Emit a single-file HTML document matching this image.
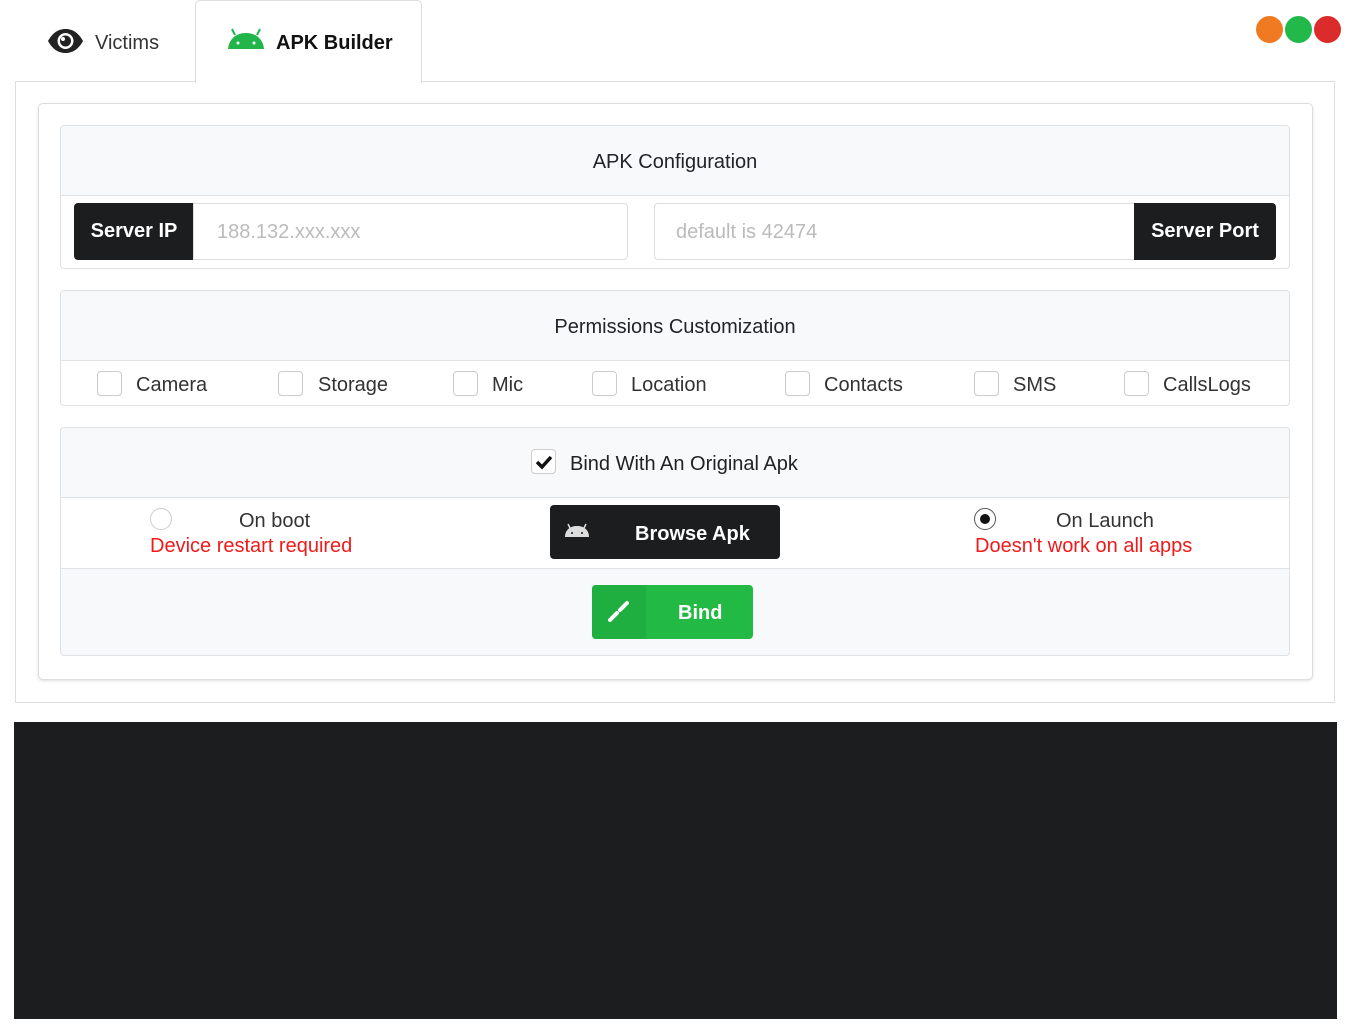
<!DOCTYPE html>
<html><head><meta charset="utf-8"><style>
*{box-sizing:border-box;margin:0;padding:0}
body{width:1350px;height:1035px;background:#fff;font-family:"Liberation Sans",sans-serif;color:#212529;position:relative;overflow:hidden}
.a{position:absolute}
.t{font-size:20px;white-space:nowrap}
.m{margin-top:2px}
.sec{position:absolute;left:60px;width:1230px;border:1px solid #dee2e6;border-radius:4px;background:#fff;overflow:hidden}
.hd{background:#f8f9fa;border-bottom:1px solid #dee2e6;position:relative}
.cb{position:absolute;width:25px;height:25px;border:1px solid #ccc;border-radius:4px;background:#fff}
.dot{position:absolute;width:27px;height:27px;border-radius:50%;top:16px}
</style></head><body>
<svg class="a" style="left:47px;top:28px" width="37" height="26" viewBox="0 0 37 26"><path d="M1 13C6 4 12 1 18.5 1S31 4 36 13C31 22 25 25 18.5 25S6 22 1 13Z" fill="#222"/><circle cx="18.5" cy="13" r="8" fill="#fff"/><circle cx="18.5" cy="13" r="5.5" fill="#222"/><circle cx="16" cy="11" r="2" fill="#fff"/></svg>
<div class="a t m" style="left:95px;top:30px;color:#333">Victims</div>
<div class="a" style="left:195px;top:0;width:227px;height:83px;border:1px solid #ddd;border-bottom:none;border-radius:5px 5px 0 0;background:#fff;z-index:2"></div>
<svg class="a" style="left:227px;top:27px;z-index:3" width="38" height="23" viewBox="0 0 38 23"><path d="M1 22C2 12 9 6 19 6S36 12 37 22Z" fill="#22b54a"/><path d="M8 8L5 2M30 8L33 2" stroke="#22b54a" stroke-width="2"/><circle cx="11" cy="16" r="1.5" fill="#fff"/><circle cx="27" cy="16" r="1.5" fill="#fff"/></svg>
<div class="a t m" style="left:276px;top:30px;z-index:3;color:#111;font-weight:bold">APK Builder</div>
<div class="dot" style="left:1256px;background:#f07a22"></div>
<div class="dot" style="left:1285px;background:#22b94a"></div>
<div class="dot" style="left:1314px;background:#dc2b2b"></div>
<div class="a" style="left:15px;top:81px;width:1320px;height:622px;border:1px solid #ddd;background:#fff"></div>
<div class="a" style="left:38px;top:103px;width:1275px;height:577px;border:1px solid #ddd;border-radius:5px;box-shadow:0 1px 3px rgba(0,0,0,.12);background:#fff"></div>
<div class="sec" style="top:125px;height:144px">
 <div class="hd" style="height:70px"><div class="a t m" style="left:0;right:0;text-align:center;top:23px">APK Configuration</div></div>
</div>
<div class="a t" style="left:74px;top:203px;width:120px;height:57px;background:#1c1d1f;color:#fff;border-radius:4px 0 0 4px;line-height:57px;text-align:center;font-weight:bold">Server IP</div>
<div class="a t" style="left:193px;top:203px;width:435px;height:57px;border:1px solid #ddd;border-radius:0 4px 4px 0;color:#bbb;line-height:57px;padding-left:23px">188.132.xxx.xxx</div>
<div class="a t" style="left:654px;top:203px;width:481px;height:57px;border:1px solid #ddd;border-radius:4px 0 0 4px;color:#bbb;line-height:57px;padding-left:21px">default is 42474</div>
<div class="a t" style="left:1134px;top:203px;width:142px;height:57px;background:#1c1d1f;color:#fff;border-radius:0 4px 4px 0;line-height:57px;text-align:center;font-weight:bold">Server Port</div>
<div class="sec" style="top:290px;height:116px">
 <div class="hd" style="height:70px"><div class="a t m" style="left:0;right:0;text-align:center;top:23px">Permissions Customization</div></div>
</div>
<div class="cb" style="left:97px;top:371px"></div><div class="a t m" style="left:136px;top:372px;color:#333">Camera</div>
<div class="cb" style="left:278px;top:371px"></div><div class="a t m" style="left:318px;top:372px;color:#333">Storage</div>
<div class="cb" style="left:453px;top:371px"></div><div class="a t m" style="left:492px;top:372px;color:#333">Mic</div>
<div class="cb" style="left:592px;top:371px"></div><div class="a t m" style="left:631px;top:372px;color:#333">Location</div>
<div class="cb" style="left:785px;top:371px"></div><div class="a t m" style="left:824px;top:372px;color:#333">Contacts</div>
<div class="cb" style="left:974px;top:371px"></div><div class="a t m" style="left:1013px;top:372px;color:#333">SMS</div>
<div class="cb" style="left:1124px;top:371px"></div><div class="a t m" style="left:1163px;top:372px;color:#333">CallsLogs</div>
<div class="sec" style="top:427px;height:229px;background:#f8f9fa">
 <div class="hd" style="height:70px"></div>
 <div style="height:71px;background:#fff;border-bottom:1px solid #dee2e6"></div>
</div>
<div class="cb" style="left:531px;top:449px"></div>
<svg class="a" style="left:535px;top:454px" width="18" height="16" viewBox="0 0 18 16"><path d="M2 8L7 13L16 3" stroke="#111" stroke-width="3.5" fill="none"/></svg>
<div class="a t m" style="left:570px;top:451px;color:#222">Bind With An Original Apk</div>
<div class="a" style="left:150px;top:508px;width:22px;height:22px;border:1px solid #ccc;border-radius:50%"></div>
<div class="a t m" style="left:239px;top:508px;color:#333">On boot</div>
<div class="a t m" style="left:150px;top:533px;color:#f01a1a">Device restart required</div>
<div class="a" style="left:550px;top:505px;width:230px;height:54px;background:#1c1d1f;border-radius:4px"></div>
<svg class="a" style="left:564px;top:522px" width="26" height="16" viewBox="0 0 26 16"><path d="M1 15C1 8 6 4 13 4S25 8 25 15Z" fill="#ddd"/><path d="M6 6L4 2M20 6L22 2" stroke="#ddd" stroke-width="1.5"/><circle cx="8" cy="11" r="1" fill="#1c1d1f"/><circle cx="18" cy="11" r="1" fill="#1c1d1f"/></svg>
<div class="a t m" style="left:635px;top:521px;color:#fff;font-weight:bold">Browse Apk</div>
<div class="a" style="left:974px;top:508px;width:22px;height:22px;border:1px solid #555;border-radius:50%"></div>
<div class="a" style="left:980px;top:514px;width:10px;height:10px;background:#111;border-radius:50%"></div>
<div class="a t m" style="left:1056px;top:508px;color:#333">On Launch</div>
<div class="a t m" style="left:975px;top:533px;color:#f01a1a">Doesn't work on all apps</div>
<div class="a" style="left:592px;top:585px;width:161px;height:54px;background:#22ba45;border-radius:4px;overflow:hidden"><div style="width:54px;height:54px;background:#1fae40"></div></div>
<svg class="a" style="left:607px;top:600px" width="24" height="24" viewBox="0 0 24 24"><path d="M3 20L10 13M13 10L20 3" stroke="#fff" stroke-width="4" stroke-linecap="round"/><path d="M8 15L9 16" stroke="#fff" stroke-width="6"/></svg>
<div class="a t m" style="left:678px;top:600px;color:#fff;font-weight:bold">Bind</div>
<div class="a" style="left:14px;top:722px;width:1323px;height:297px;background:#1c1d1f"></div>
</body></html>
